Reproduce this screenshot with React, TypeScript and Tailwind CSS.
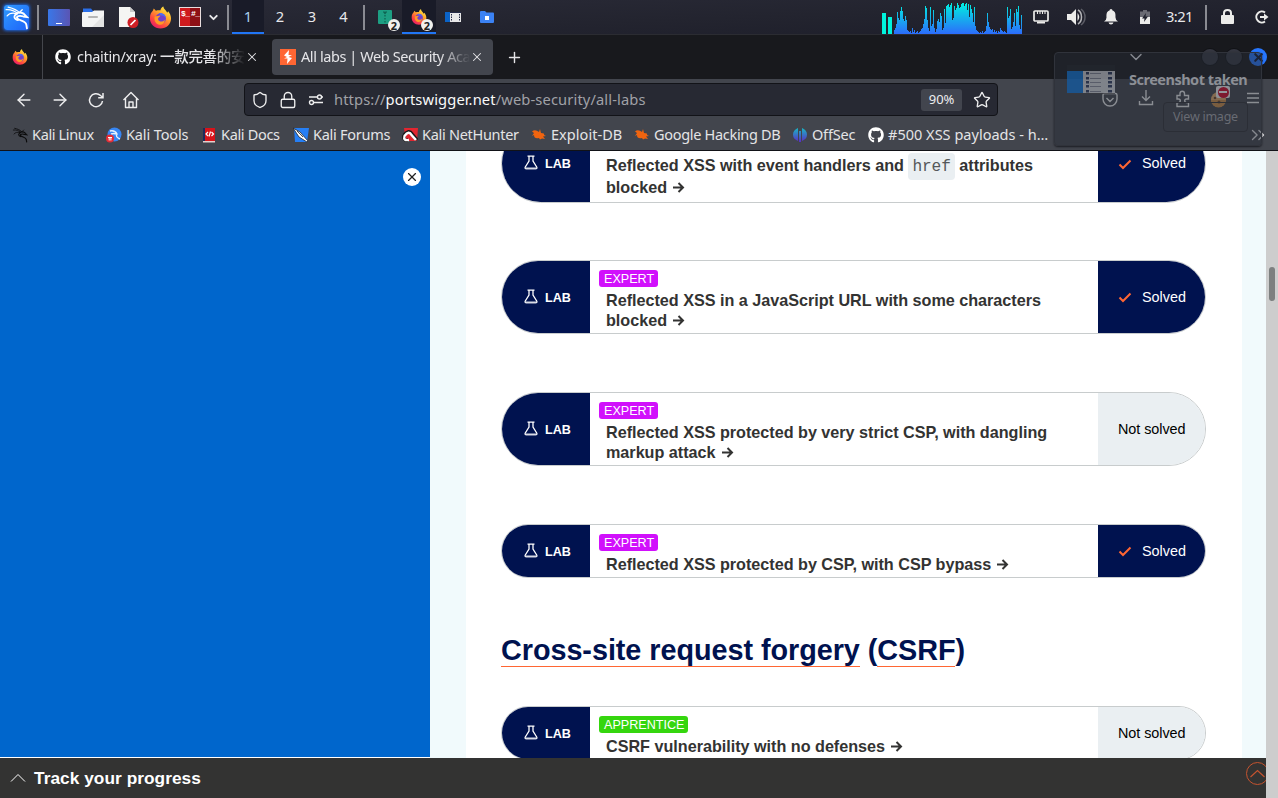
import React from "react";
import { ArrowLeft, ArrowRight, House, Lock, Shield, Star, Menu, X, Plus, ChevronDown, ChevronUp, ChevronsRight } from "lucide-react";
import { FaGithub } from "react-icons/fa";

const cpu = [4, 6, 10, 22, 13, 16, 14, 23, 27, 23, 15, 13, 18, 14, 9, 4, 3, 2, 3, 1, 6, 2, 1, 4, 1, 2, 3, 1, 2, 3, 5, 5, 6, 10, 15, 28, 26, 14, 6, 3, 9, 27, 8, 10, 24, 6, 2, 5, 13, 15, 7, 12, 21, 18, 4, 6, 25, 11, 14, 28, 29, 30, 27, 29, 31, 14, 16, 21, 28, 24, 26, 31, 29, 26, 27, 30, 29, 31, 31, 28, 30, 31, 24, 30, 17, 28, 29, 25, 21, 12, 27, 8, 4, 3, 1, 2, 1, 2, 1, 3, 1, 2, 3, 4, 8, 21, 12, 7, 5, 4, 5, 2, 4, 3, 2, 3, 1, 3, 2, 6, 4, 3, 2, 2, 3, 2, 1, 27, 16, 18, 25, 13, 5, 7, 12, 21, 8, 25, 22, 28, 14, 9, 5, 19];

function Dragon({ size, color }: { size: number; color: string }) {
  return (
    <svg width={size} height={size} viewBox="0 0 24 24" fill="none" stroke={color} strokeLinecap="round">
      <path d="M4 2C8 3 12 4 15 7.500" strokeWidth="1.300" />
      <path d="M2 4.500C7 4 10 5.500 13 8" strokeWidth="1.200" />
      <path d="M3 10.500C5 8 8 7.500 11.500 8.200" strokeWidth="1.200" />
      <path d="M12 8C15 6.500 19 7.500 20 9.500L22 11.500L18.500 11C13 9.500 11 12 13.500 13.500C17 15.500 21 15.500 21.500 19L22 22.500" strokeWidth="1.800" />
      <path d="M12.500 8.500C9 10 9 13.500 13.500 14.500" strokeWidth="1.700" />
      <path d="M15 7L17.500 4.500" strokeWidth="1.200" />
    </svg>
  );
}

function Firefox({ size, id }: { size: number; id: string }) {
  return (
    <svg width={size} height={size} viewBox="0 0 24 24">
      <defs>
        <linearGradient id={id} x1="0.85" y1="0.05" x2="0.2" y2="1">
          <stop offset="0" stopColor="#fff04a" />
          <stop offset="0.35" stopColor="#ffa72a" />
          <stop offset="0.7" stopColor="#ff4a3e" />
          <stop offset="1" stopColor="#e5156c" />
        </linearGradient>
      </defs>
      <path fill={`url(#${id})`} d="M4 5L5 2.500L7.200 5C9 4.300 10.500 4.400 12 4.500C12 2.500 13.500 1 15 .5C15 3 18 4.500 19 7L20 5.500C22 8 23 10.500 23 13C23 19 18 23.500 12 23.500C5.500 23.500 1 18.500 1 13C1 9 2 7 4 5Z" />
      <circle cx="12.200" cy="13" r="5.500" fill="#7240c9" />
      <path fill="#ff9a25" d="M6 11L12 10C11 12 9 12 9.500 14C10.500 17 15 17 16.500 14C16.500 18.500 13 20 10.500 19.500C7 19 5 15 6 11Z" />
      <path fill="#4f6df0" d="M10 7.500C14 6.500 17.500 9 17.500 13C16 10 14 9.500 12.500 10Z" />
    </svg>
  );
}

function Sep() {
  return <span className="h-[25px] w-[2px] shrink-0 bg-[#8a8b92]" />;
}

function Badge() {
  return <span className="absolute left-[19px] top-[19px] flex size-[12px] items-center justify-center rounded-full bg-[#f1f1ee] text-[11px] font-bold leading-none text-[#222]">2</span>;
}

function Panel() {
  return (
    <header className="flex h-[35px] shrink-0 items-center border-b border-[#2b2c32] bg-[linear-gradient(178deg,#2a2b38_0%,#23242f_55%,#1d1e2a_100%)] text-[14.7px] text-[#e8e8ea]">
      <div className="flex w-[37px] shrink-0 pl-[4px]">
        <span className="flex size-[25px] items-center justify-center rounded-[3px] bg-[linear-gradient(135deg,#2f9bff,#1e62f8)] shadow-[0_0_3px_1px_#1d63d8]"><Dragon size={25} color="#fff" /></span>
      </div>
      <Sep />
      <div className="flex w-[188px] shrink-0 items-center pl-[9px]">
        <span className="flex h-[17px] w-[22px] items-end justify-center rounded-[1px] bg-[linear-gradient(90deg,#3977e8,#5a55b4)] pb-[2px]"><span className="h-[1px] w-[6px] bg-white" /></span>
        <svg className="ml-[12px]" width="22" height="22" viewBox="0 0 22 22">
          <path d="M1 2.500H9L11 5H21V12H1Z" fill="#2b6fe8" />
          <path d="M0 7Q0 6 1 6H10L12 4.500H22V20Q22 21 21 21H1Q0 21 0 20Z" fill="#f4f4f4" />
          <path d="M22 9V21H10Z" fill="#e3e3e3" />
          <path d="M7 11H15" stroke="#b5b5b5" strokeWidth="2" strokeLinecap="round" />
        </svg>
        <svg className="ml-[14px]" width="21" height="24" viewBox="0 0 21 24">
          <path d="M1 2H12L17 7V22H1Z" fill="#f5f5f3" />
          <path d="M12 2V7H17Z" fill="#c9c9c9" />
          <circle cx="15" cy="17.500" r="5.500" fill="#cf1f25" />
          <path d="M12.500 20L17.500 15" stroke="#fff" strokeWidth="1.700" />
        </svg>
        <span className="ml-[10px]"><Firefox size={23} id="fx-a" /></span>
        <span className="ml-[7px] flex h-[20px] w-[22px] border border-[#e9dede] bg-[linear-gradient(90deg,#cf1b1e_50%,#8e1015_50%)] pl-px pt-px font-['Liberation_Mono'] text-[8px] font-bold leading-[9px] tracking-[-0.6px] text-white"><span className="w-[10px]">$_</span><span>#_</span></span>
        <ChevronDown className="ml-[6px]" size={13} strokeWidth={3.5} />
      </div>
      <Sep />
      <div className="flex h-[34px] w-[134px] shrink-0 self-start pl-[3px] text-center leading-[33px]">
        <span className="w-[32px] border-b-2 border-[#2176f5] bg-[#191b28] text-[#a9d0ee]">1</span>
        <span className="w-[32px]">2</span>
        <span className="w-[32px]">3</span>
        <span className="w-[31px]">4</span>
      </div>
      <Sep />
      <div className="flex h-[34px] w-[515px] shrink-0 self-start pl-[4px]">
        <span className="relative flex w-[33px] pl-[9px] pt-[10px]">
          <svg width="14" height="14" viewBox="0 0 14 14"><rect width="14" height="14" rx="1" fill="#1d9f83" /><path d="M5.500 1.500L7 3.500L8.500 1.500M7 5V6.500M7 8V9.500M7 11V12.500" stroke="#0e6452" fill="none" strokeWidth="1.300" /></svg>
          <Badge />
        </span>
        <span className="relative flex w-[34px] border-b-2 border-[#2176f5] bg-[#191b28] pl-[9px] pt-[9px]">
          <Firefox size={16} id="fx-b" />
          <Badge />
        </span>
        <span className="flex w-[44px] items-center pl-[9px]">
          <svg width="16" height="10" viewBox="0 0 16 10"><rect width="16" height="10" fill="#e8e8e8" /><rect width="5" height="10" fill="#0b63c7" /><path d="M5 .5H16" stroke="#252b47" /><path d="M6.500 2V9M14.500 2V9" stroke="#252b47" strokeDasharray="1.500 1" /></svg>
        </span>
        <span className="flex items-center">
          <svg width="14" height="12" viewBox="0 0 14 12"><path d="M0 1Q0 0 1 0H5L6.500 1.500H13Q14 1.500 14 2.500V11Q14 12 13 12H1Q0 12 0 11Z" fill="#3b82f4" /><rect x="5" y="5" width="4" height="4" fill="#fff" /></svg>
        </span>
      </div>
      <div className="flex w-[145px] shrink-0 self-start pl-[2px]">
        <svg width="141" height="34" viewBox="0 0 141 34">
          <defs><linearGradient id="cpu" gradientUnits="userSpaceOnUse" x1="0" y1="3" x2="0" y2="34"><stop offset="0" stopColor="#00f0df" /><stop offset="1" stopColor="#2c6cfb" /></linearGradient></defs>
          <rect y="13" width="4" height="21" fill="#00f3dc" />
          <rect x="6" y="17" width="4" height="17" fill="#00f3dc" />
          {cpu.map((h, i) => <rect key={i} shapeRendering="crispEdges" x={12 + i * 0.889} y={34 - h} width="1" height={h} fill="url(#cpu)" />)}
        </svg>
      </div>
      <div className="flex w-[180px] shrink-0 items-center pl-[8px]">
        <svg width="16" height="14" viewBox="0 0 16 14" fill="none" stroke="#ececea" strokeWidth="1.700"><rect x="1" y="1" width="14" height="10" rx="1" /><path d="M4.500 1V4M7 1V4M9.500 1V4M12 1V4" strokeWidth="1.100" /><path d="M4 12.500H12" strokeWidth="2" /></svg>
        <svg className="ml-[18px]" width="19" height="18" viewBox="0 0 19 18"><path d="M0 6H4L9 1V17L4 12H0Z" fill="#ececea" /><path d="M10.500 5Q14 9 10.500 13Z" fill="#ececea" /><path d="M11 2Q14.500 4 14.500 9T11 16" fill="none" stroke="#b5b5b8" strokeWidth="1.500" /><path d="M14 1Q18 4 18 9T14 17" fill="none" stroke="#5c5d66" strokeWidth="1.500" /></svg>
        <svg className="ml-[18px]" width="14" height="16" viewBox="0 0 14 16" fill="#ececea"><path d="M7 0Q8.500 0 8.500 1.500C12 2.500 11.500 6 11.500 8.500Q11.500 11 14 12.500H0Q2.500 11 2.500 8.500C2.500 6 2 2.500 5.500 1.500Q5.500 0 7 0ZM4.500 13.500H9.500Q9 15.500 7 15.500T4.500 13.500Z" /></svg>
        <svg className="ml-[22px]" width="10" height="14" viewBox="0 0 10 14"><path d="M0 1.500H3V0H7V1.500H10V7H0Z" fill="#6a6b73" /><path d="M0 7H10V14H0Z" fill="#ececea" /><path d="M6 3L2 8.500H4.500L4 12L8 6.500H5.500Z" fill="#20222d" /></svg>
        <span className="ml-[16px] whitespace-nowrap pb-px tracking-[-0.6px]">3:21</span>
      </div>
      <Sep />
      <svg className="ml-[14px] shrink-0" width="13" height="16" viewBox="0 0 13 16"><rect y="6" width="13" height="9" rx="1" fill="#ececea" /><path d="M3 7V4Q3 1 6.500 1T10 4V7" fill="none" stroke="#ececea" strokeWidth="2" /></svg>
      <svg className="ml-[20px] shrink-0" width="16" height="14" viewBox="0 0 16 14" fill="none" stroke="#ececea" strokeWidth="2"><path d="M11 2.500A5.500 5.500 0 1 0 11 11.500M6 7H11" /><path d="M10 3.500L14.500 7L10 10.500Z" fill="#ececea" stroke="none" /></svg>
    </header>
  );
}

function Tabs() {
  return (
    <div className="flex h-[44px] shrink-0 items-center bg-[#18191d] text-[14.5px] text-[#e5e5e8]">
      <span className="flex h-full w-[43px] shrink-0 items-center border-r border-[#44464c] pl-[12px]"><Firefox size={16} id="fx-c" /></span>
      <div className="flex w-[229px] shrink-0 items-center pl-[12px]">
        <FaGithub size={16} color="#fff" />
        <span className="ml-[6px] w-[168px] overflow-hidden whitespace-nowrap pb-px tracking-[-0.33px] [mask-image:linear-gradient(90deg,#000_80%,transparent_100%)]">chaitin/xray: <span className="font-['Noto_Sans_CJK_SC'] font-medium">一款完善的安</span></span>
        <X size={14} strokeWidth={1.8} />
      </div>
      <div className="flex h-[36px] w-[221px] shrink-0 items-center rounded-[4px] bg-[#42454d] pl-[8px]">
        <svg width="16" height="16" viewBox="0 0 16 16"><rect width="16" height="16" fill="#ff6633" /><path d="M9 1L4 6.500L7 8L4 9.500H7.500L7 15L12 9L8.500 8L12 6H8.500Z" fill="#fff" /></svg>
        <span className="ml-[5px] w-[169px] overflow-hidden whitespace-nowrap tracking-[-0.41px] [mask-image:linear-gradient(90deg,#000_82%,transparent_100%)]">All labs | Web Security Aca</span>
        <X size={14} strokeWidth={1.8} />
      </div>
      <Plus className="ml-[13px] shrink-0" size={17} strokeWidth={2} />
      <ChevronDown className="ml-[603px] shrink-0" size={20} strokeWidth={1.7} />
      <div className="ml-[56px] flex shrink-0 items-center gap-[8px]">
        <span className="size-[16px] rounded-full bg-[#343640] ring-1 ring-[#111216]" />
        <span className="size-[16px] rounded-full bg-[#343640] ring-1 ring-[#111216]" />
        <span className="-ml-px flex size-[18px] items-center justify-center rounded-full bg-[#2777ff] text-[#101b36]"><X size={13} strokeWidth={4} /></span>
      </div>
    </div>
  );
}

function Toolbar() {
  return (
    <div className="flex h-[41px] shrink-0 items-center bg-[#42454d] text-[#eeeeef]">
      <div className="flex w-[244px] shrink-0 items-center gap-[16px] pl-[14px]">
        <ArrowLeft size={20} strokeWidth={1.7} />
        <ArrowRight size={20} strokeWidth={1.7} />
        <svg width="20" height="20" viewBox="0 0 20 20" fill="none" stroke="currentColor" strokeWidth="1.500"><path d="M16.500 11A6.500 6.500 0 1 1 14.500 5.500L17 7.500M17 3V7.800H12.200" /></svg>
        <svg width="18" height="18" viewBox="0 0 18 18" fill="none" stroke="currentColor" strokeWidth="1.400" strokeLinejoin="round"><path d="M1.500 9L9 1.500L16.500 9M3.500 7.500V16.500H14.500V7.500M7 16V11H11V16" /></svg>
      </div>
      <div className="flex h-[33px] w-[754px] shrink-0 items-center rounded-[4px] border border-[#121318] bg-[#272933] pl-[6px] text-[14.7px]">
        <Shield size={18} strokeWidth={1.8} />
        <Lock className="ml-[10px]" size={18} strokeWidth={1.8} />
        <svg className="ml-[11px]" width="16" height="12" viewBox="0 0 16 12" fill="none" stroke="currentColor" strokeWidth="1.400"><circle cx="11.500" cy="3" r="2" /><circle cx="3.500" cy="8.500" r="2" /><path d="M1 3H9M6 8.500H15M13.500 3H15" /></svg>
        <span className="ml-[10px] w-[587px] whitespace-nowrap tracking-[0.12px] text-[#a0a1a7]">https://<span className="text-[#fafafa]">portswigger.net</span>/web-security/all-labs</span>
        <span className="flex h-[22px] w-[41px] items-center justify-center rounded-[3px] bg-[#42454e] text-[13px] tracking-[-0.1px]">90%</span>
        <Star className="ml-[11px]" size={18} strokeWidth={1.8} />
      </div>
      <svg className="ml-[104px] shrink-0" width="16" height="16" viewBox="0 0 16 16" fill="none" stroke="currentColor" strokeWidth="1.400"><path d="M2.500 1.500H13.500Q15 1.500 15 3V7A7 7 0 0 1 1 7V3Q1 1.500 2.500 1.500ZM4.500 6L8 9.500L11.500 6" /></svg>
      <svg className="-mt-[3px] ml-[20px] shrink-0" width="16" height="16" viewBox="0 0 16 16" fill="none" stroke="currentColor" strokeWidth="1.400"><path d="M8 0V10M4 6.500L8 10.500L12 6.500M1.500 11V14.500H14.500V11" /></svg>
      <svg className="-mt-px ml-[20px] shrink-0" width="17" height="18" viewBox="0 0 17 18" fill="none" stroke="currentColor" strokeWidth="1.400"><path d="M3 5.500H6V3.500A2.200 2.200 0 0 1 10.500 3.500V5.500H14.500V9H12.500A1.800 1.800 0 0 0 12.500 12.600H14.500V16.500H3V12.600H4.500A1.800 1.800 0 0 0 4.500 9H3Z" /></svg>
      <span className="relative ml-[19px] shrink-0">
        <svg width="17" height="17" viewBox="0 0 17 17"><circle cx="8.500" cy="8.500" r="7.500" fill="#e5ab6b" /><path d="M1 9H16A7.500 7.500 0 0 1 1 9Z" fill="#cf8f48" /><circle cx="5" cy="7" r="1.300" fill="#6d4528" /><circle cx="9" cy="11" r="1.500" fill="#6d4528" /><circle cx="11" cy="6" r="1" fill="#6d4528" /></svg>
        <span className="absolute left-[6px] top-[-5px] flex h-[12px] w-[14px] items-center justify-center rounded-[2px] bg-[#f5f5f5]"><span className="flex size-[11px] items-center justify-center rounded-full bg-[#d40929]"><span className="h-[2px] w-[8px] bg-white" /></span></span>
      </span>
      <svg className="-mt-[3px] ml-[19px] shrink-0" width="14" height="12" viewBox="0 0 14 12" stroke="currentColor" strokeWidth="1.300"><path d="M1 1.500H13M1 6H13M1 10.500H13" /></svg>
    </div>
  );
}

function Bug() {
  return <svg width="16" height="16" viewBox="0 0 16 16"><path d="M1 4.500Q4 2 8 5L9 2L10 6Q14 6 13 8L15 9L12 9.500L14 12L11 11.500L9 12.500L8 11Q3 12 3 8L1 9L3 6Z" fill="#f0640f" /></svg>;
}

function Bookmark({ slot, tracking, icon, children }: { slot: string; tracking: string; icon: React.ReactNode; children: React.ReactNode }) {
  return <span className={`flex shrink-0 items-center gap-[4px] whitespace-nowrap ${slot} ${tracking}`}>{icon}<span>{children}</span></span>;
}

function Bookmarks() {
  return (
    <nav className="flex h-[31px] shrink-0 items-center border-b border-[#111217] bg-[#42454d] pl-[12px] text-[14.5px] text-[#e4e4e6]">
      <Bookmark slot="w-[94px]" tracking="tracking-[-0.35px]" icon={<Dragon size={16} color="#0b0b0c" />}>Kali Linux</Bookmark>
      <Bookmark slot="w-[95px]" tracking="tracking-[-0.13px]" icon={<svg width="16" height="16" viewBox="0 0 16 16"><circle cx="8.500" cy="7.500" r="7" fill="#3786f3" /><path d="M4 4Q9 3 11 7Q9 10 14 12M5 7Q8 6 10 7" fill="none" stroke="#e5f1ff" strokeWidth="1.400" /><circle cx="4" cy="11.500" r="4" fill="#e32c35" /><path d="M2 10.500H6M3.200 10.500V13.500M4.900 10.500V13.500" stroke="#fff" /></svg>}>Kali Tools</Bookmark>
      <Bookmark slot="w-[92px]" tracking="tracking-[-0.33px]" icon={<svg width="16" height="16" viewBox="0 0 16 16"><path d="M2 1H14V14H2Z" fill="#d7131a" /><path d="M2 1H4V14H2Z" fill="#1e2b5c" /><path d="M2 14H14V15.500H2Z" fill="#e5d1cd" /><path d="M7 5L5 7L7 9M10.500 5L12.500 7L10.500 9M9.500 4.500L8 9.500" stroke="#fff" fill="none" strokeWidth="1.200" /></svg>}>Kali Docs</Bookmark>
      <Bookmark slot="w-[109px]" tracking="tracking-[-0.26px]" icon={<svg width="16" height="16" viewBox="0 0 16 16"><path d="M1 1H16L14 15H2Z" fill="#267ff5" /><path d="M0 1L7 5L15 14L14 15L6 10Z" fill="#fff" stroke="#20242c" strokeWidth=".8" /><path d="M4 4L10 10" stroke="#222" strokeWidth=".8" /></svg>}>Kali Forums</Bookmark>
      <Bookmark slot="w-[129px]" tracking="tracking-[-0.29px]" icon={<svg width="16" height="16" viewBox="0 0 16 16"><path d="M2 1H16L15 14H4Z" fill="#e22630" /><path d="M2 8Q7 2 10 7L15 13M2 8Q1 14 6 13" fill="none" stroke="#171717" strokeWidth="3.500" /><path d="M7 13Q1 14 2.500 9Q7 3 9.500 8L14 13" fill="none" stroke="#fff" strokeWidth="2.400" /></svg>}>Kali NetHunter</Bookmark>
      <Bookmark slot="w-[103px]" tracking="tracking-[0.05px]" icon={<Bug />}>Exploit-DB</Bookmark>
      <Bookmark slot="w-[158px]" tracking="tracking-[-0.31px]" icon={<Bug />}>Google Hacking DB</Bookmark>
      <Bookmark slot="w-[76px]" tracking="tracking-[-0.2px]" icon={<svg width="16" height="16" viewBox="0 0 16 16"><defs><linearGradient id="os" x1="0" y1="0" x2="0" y2="1"><stop stopColor="#18b6c4" /><stop offset="1" stopColor="#5b2bc4" /></linearGradient></defs><path d="M6 1V14Q1 12 1 7.500T6 1M10 1V14Q15 12 15 7.500T10 1M7 4H9V15H7Z" fill="url(#os)" /></svg>}>OffSec</Bookmark>
      <Bookmark slot="w-[379px]" tracking="tracking-[0.02px]" icon={<FaGithub size={16} color="#fff" />}>#500 XSS payloads - h…</Bookmark>
      <ChevronsRight className="shrink-0" size={22} strokeWidth={1.5} />
    </nav>
  );
}

function Flask() {
  return <svg className="-mt-[2px]" width="14" height="15" viewBox="0 0 14 15" fill="none" stroke="#fff" strokeWidth="1.300"><path d="M3.500 1.200H10.500M5 1V6L1.300 12Q.6 13.700 2 13.700H12Q13.400 13.700 12.700 12L9 6V1" /><path d="M1.500 13.300H12.500" strokeWidth="1.800" stroke="#d8dbe5" /></svg>;
}

function Arrow() {
  return <svg className="ml-[5px] inline-block align-[-1px]" width="13" height="13" viewBox="0 0 13 13" fill="none" stroke="#333332" strokeWidth="2"><path d="M1 6.500H11M6.500 2L11 6.500L6.500 11" /></svg>;
}

function Lab({ box, level, solved, children }: { box: string; level?: "EXPERT" | "APPRENTICE"; solved?: boolean; children: React.ReactNode }) {
  return (
    <article className={`flex w-[705px] shrink-0 overflow-hidden rounded-full border border-[#c8cccd] bg-white ${box}`}>
      <div className="flex w-[88px] shrink-0 items-center bg-[#00124f] pl-[22px] text-[12.6px] font-bold text-white"><Flask /><span className="ml-[7px] pt-[2px]">LAB</span></div>
      <div className="flex w-[508px] shrink-0 flex-col pl-[9px]">
        {level && <span className={`mt-[9px] flex h-[17px] items-center self-start rounded-[3px] pl-[5px] pr-[4px] pt-px text-[12.6px] text-white ${level === "EXPERT" ? "bg-[#d110fc]" : "bg-[#35d60e]"}`}>{level}</span>}
        <div className={`pl-[7px] text-[16.2px] font-bold leading-[20px] tracking-[-0.02px] text-[#333332] ${level ? "mt-[3px]" : "mt-[26px]"}`}>{children}</div>
      </div>
      {solved ? (
        <div className="flex flex-1 items-center bg-[#00124f] pl-[20px] text-[14.4px] text-white">
          <svg width="14" height="12" viewBox="0 0 14 12" fill="none" stroke="#ff6633" strokeWidth="2"><path d="M1.500 6.500L5 10L12.500 2.500" /></svg>
          <span className="ml-[10px] pt-px">Solved</span>
        </div>
      ) : (
        <div className="flex flex-1 items-center bg-[#eaeff2] pl-[20px] text-[14.4px] text-black"><span className="whitespace-nowrap pt-px tracking-[-0.05px]">Not solved</span></div>
      )}
    </article>
  );
}

function Page() {
  return (
    <div className="flex min-h-0 flex-1 bg-white font-['Liberation_Sans',sans-serif]">
      <div className="flex w-[1266px] shrink-0 flex-col">
        <div className="flex h-[607px] shrink-0 overflow-hidden">
          <aside className="flex h-[606px] w-[430px] shrink-0 items-start justify-end bg-[#0066cc] pr-[9px] pt-[17px]">
            <span className="flex size-[18px] items-center justify-center rounded-full bg-white text-[#222]"><X size={14} strokeWidth={2} /></span>
          </aside>
          <div className="flex h-full flex-1 justify-start bg-[#f1fafc] pl-[36px]">
            <main className="flex w-[776px] flex-col bg-white pl-[35px]">
              <Lab box="-mt-[27px] h-[79px]" solved>
                <div className="mt-[2px] flex h-[24px] items-center whitespace-pre">Reflected XSS with event handlers and <code className="mt-[2px] flex h-[27px] items-center rounded-[4px] bg-[#eaeff2] px-[4px] pt-[2px] font-['Liberation_Mono'] text-[16.2px] font-normal tracking-[-0.1px] text-[#55585a]">href</code> attributes</div>
                <div>blocked<Arrow /></div>
              </Lab>
              <Lab box="mt-[57px] h-[74px]" level="EXPERT" solved>Reflected XSS in a JavaScript URL with some characters<br />blocked<Arrow /></Lab>
              <Lab box="mt-[58px] h-[74px]" level="EXPERT">Reflected XSS protected by very strict CSP, with dangling<br />markup attack<Arrow /></Lab>
              <Lab box="mt-[58px] h-[54px]" level="EXPERT" solved>Reflected XSS protected by CSP, with CSP bypass<Arrow /></Lab>
              <h2 className="mt-[56px] h-[33px] whitespace-nowrap text-[28.8px] font-bold leading-[33px] tracking-[-0.05px] text-[#00124f]"><span className="inline-block h-[33px] border-b border-[#ff6633]">Cross-site request forgery</span> (<span className="inline-block h-[33px] border-b border-[#ff6633]">CSRF</span>)</h2>
              <Lab box="mt-[39px] h-[54px]" level="APPRENTICE">CSRF vulnerability with no defenses<Arrow /></Lab>
            </main>
          </div>
        </div>
        <footer className="flex h-[40px] shrink-0 items-center overflow-hidden bg-[#333332] pl-[8px] text-[17.3px] font-bold text-white">
          <svg width="20" height="12" viewBox="0 0 20 12" fill="none" stroke="#fff" strokeWidth="1"><path d="M3 9.500L10 2.500L17 9.500" /></svg>
          <span className="ml-[6px] flex-1 pt-[2px] tracking-[0.04px]">Track your progress</span>
          <span className="-mr-[3px] mb-[9px] flex size-[23px] items-center justify-center rounded-full border border-[#c4532f] text-[#c4532f]"><svg width="17" height="10" viewBox="0 0 17 10" fill="none" stroke="currentColor" strokeWidth="1.200"><path d="M1.500 8L8.500 1.500L15.500 8" /></svg></span>
        </footer>
      </div>
      <div className="flex w-[12px] shrink-0 justify-center bg-[#cdcdcd] pt-[116px]"><span className="h-[34px] w-[6px] rounded-full bg-[#7d8080]" /></div>
    </div>
  );
}

function Notification() {
  return (
    <div className="absolute left-[1054px] top-[52px] flex h-[94px] w-[208px] rounded-[4px] border border-[#30333b] bg-[#262b36]/50 pl-[12px] pt-[12px] shadow-[0_1px_2px_#1a1c22]">
      <svg width="48" height="30" viewBox="0 0 48 30" opacity=".75"><rect y="6" width="48" height="22" fill="#999ca3" /><rect width="48" height="6" fill="#22262e" /><rect y="6" width="16" height="22" fill="#155da4" /><path d="M0 28H48V29H0Z" fill="#383a40" />{[7, 12, 16, 20, 25].map((y) => <g key={y}><rect x="19" y={y} width="3" height="2.500" fill="#28334f" /><rect x="41" y={y} width="4" height="2.500" fill="#28334f" /><rect x="23" y={y + 1} width="11" height="1" fill="#656977" /></g>)}</svg>
      <div className="flex flex-1 flex-col pl-[14px] pt-[4px]">
        <span className="whitespace-nowrap text-[14.5px] font-bold leading-[20px] tracking-[-0.5px] text-[#8c8f95]">Screenshot taken</span>
        <span className="ml-[34px] mt-[13px] flex h-[30px] w-[85px] items-center justify-center whitespace-nowrap rounded-[4px] border border-[#2b2e36] pt-px text-[12.5px] tracking-[-0.25px] text-[#686b73]">View image</span>
      </div>
    </div>
  );
}

export default function App() {
  return (
    <div className="relative flex h-[798px] w-[1278px] flex-col overflow-hidden font-['Noto_Sans','Noto_Sans_CJK_SC',sans-serif]">
      <Panel />
      <Tabs />
      <Toolbar />
      <Bookmarks />
      <Page />
      <Notification />
    </div>
  );
}
